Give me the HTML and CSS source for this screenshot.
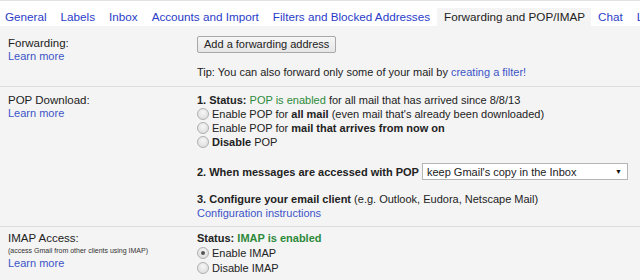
FILE: index.html
```html
<!DOCTYPE html>
<html>
<head>
<meta charset="utf-8">
<link rel="stylesheet" href="styles.css">
</head>
<body>
<div class="topline"></div>
<nav class="tabs">
  <a class="tab first">General</a>
  <a class="tab">Labels</a>
  <a class="tab">Inbox</a>
  <a class="tab">Accounts and Import</a>
  <a class="tab">Filters and Blocked Addresses</a>
  <a class="tab active">Forwarding and POP/IMAP</a>
  <a class="tab">Chat</a>
  <a class="tab">Labs</a>
</nav>
<main class="content">
  <section class="row row-fwd">
    <div class="label">
      <div class="title">Forwarding:</div>
      <a class="link">Learn more</a>
    </div>
    <div class="body">
      <button class="btn">Add a forwarding address</button>
      <div class="tip">Tip: You can also forward only some of your mail by <a class="link">creating a filter!</a></div>
    </div>
  </section>
  <section class="row row-pop">
    <div class="label">
      <div class="title">POP Download:</div>
      <a class="link">Learn more</a>
    </div>
    <div class="body">
      <div class="line"><b>1. Status: </b><span class="green">POP is enabled</span> for all mail that has arrived since 8/8/13</div>
      <label class="opt"><span class="radio"></span><span>Enable POP for <b>all mail</b> (even mail that's already been downloaded)</span></label>
      <label class="opt"><span class="radio"></span><span>Enable POP for <b>mail that arrives from now on</b></span></label>
      <label class="opt"><span class="radio"></span><span><b>Disable</b> POP</span></label>
      <div class="line when"><b>2. When messages are accessed with POP</b><span class="select"><span>keep Gmail's copy in the Inbox</span><span class="arrow">▼</span></span></div>
      <div class="line conf"><b>3. Configure your email client</b> (e.g. Outlook, Eudora, Netscape Mail)</div>
      <a class="link line">Configuration instructions</a>
    </div>
  </section>
  <section class="row row-imap">
    <div class="label">
      <div class="title">IMAP Access:</div>
      <div class="small">(access Gmail from other clients using IMAP)</div>
      <a class="link">Learn more</a>
    </div>
    <div class="body">
      <div class="line"><b>Status: </b><b class="green">IMAP is enabled</b></div>
      <label class="opt opt15"><span class="radio checked"></span><span>Enable IMAP</span></label>
      <label class="opt opt15"><span class="radio"></span><span>Disable IMAP</span></label>
    </div>
  </section>
</main>
</body>
</html>
```
FILE: styles.css
```css
html, body {
  margin: 0;
  padding: 0;
  background: #f4f4f4;
  font-family: "Liberation Sans", Arial, sans-serif;
  font-size: 11px;
  color: #222;
  overflow: hidden;
}
.topline {
  height: 1px;
  background: #e2e2e2;
}
.tabs {
  display: flex;
  align-items: flex-end;
  height: 25px;
  background: #fff;
  white-space: nowrap;
  font-size: 11.7px;
  overflow: hidden;
}
.tab {
  display: block;
  flex: none;
  height: 18px;
  line-height: 18px;
  padding: 0 7px;
  color: #2a3cc8;
}
.tab.first { padding-left: 5px; }
.tab.active {
  background: #f4f4f4;
  color: #222;
  padding: 0 6px 0 7px;
}
.content { background: #f4f4f4; }
.row {
  display: grid;
  grid-template-columns: 197px 1fr;
  white-space: nowrap;
}
.row + .row { border-top: 1px solid #dedede; }
.label { padding-left: 8px; }
.title { line-height: 14px; color: #222; font-size: 11.5px; }
.link { color: #3c55c8; display: block; line-height: 12px; }
.tip .link { display: inline; }
.small { font-size: 7px; line-height: 12px; color: #333; }
.row-fwd { padding: 10px 0 7px; }
.btn {
  display: block;
  height: 17px;
  padding: 0 6px;
  font: inherit;
  color: #222;
  border: 1px solid #a8a8a8;
  border-radius: 2px;
  background: linear-gradient(#f6f6f6, #e6e6e6);
  line-height: 15px;
}
.tip { margin-top: 12px; line-height: 14px; }
.row-pop { padding: 6px 0 6px; }
.row-imap { padding: 4px 0 5px; }
.line { display: block; line-height: 14px; }
.green { color: #2d8a3a; }
.opt {
  display: flex;
  align-items: center;
  height: 14px;
  line-height: 14px;
}
.opt15 { height: 15px; }
.radio {
  box-sizing: border-box;
  flex: none;
  width: 12px;
  height: 12px;
  margin-right: 3px;
  border: 1px solid #b0b0b0;
  border-radius: 50%;
  background: radial-gradient(circle at 50% 35%, #f6f6f6, #d8d8d8);
  position: relative;
}
.radio.checked::after {
  content: "";
  position: absolute;
  left: 3px;
  top: 3px;
  width: 4px;
  height: 4px;
  border-radius: 50%;
  background: #555;
}
.when {
  display: flex;
  align-items: center;
  margin-top: 14px;
  height: 17px;
}
.select {
  box-sizing: border-box;
  display: flex;
  align-items: center;
  justify-content: space-between;
  width: 206px;
  height: 17px;
  margin-left: 3px;
  padding: 0 5px 0 4px;
  border: 1px solid #b5b5b5;
  background: #fff;
  font-weight: normal;
}
.arrow { font-size: 7px; color: #111; }
.conf { margin-top: 12px; }
```
